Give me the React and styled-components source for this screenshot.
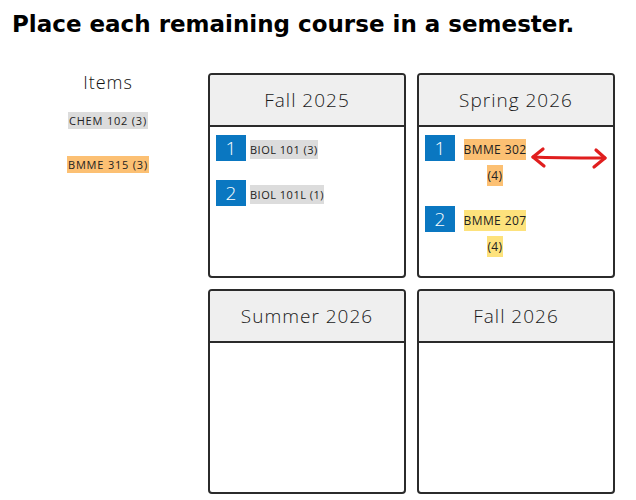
import styled, { createGlobalStyle } from "styled-components";

const GlobalStyle = createGlobalStyle`
    body {
        margin : 0;
        background : #ffffff;
        font-family : "Open Sans", "Liberation Sans", sans-serif;
        color : #222222;
    }
`;

const Page = styled.div`
    width : 636px;
    height : 500px;
    padding : 8px 0 0 8px;
    box-sizing : border-box;
`;

const Title = styled.h1`
    margin : 0 0 0 4px;
    font-family : "DejaVu Sans", "Open Sans", sans-serif;
    font-size : 23px;
    line-height : 32px;
    font-weight : 700;
    color : #000000;
`;

const Board = styled.div`
    display : flex;
    margin-top : 33px;
`;

const ItemsColumn = styled.div`
    width : 200px;
    display : flex;
    flex-direction : column;
    align-items : center;
    margin-top : -3px;

    .items-title {
        font-size : 18px;
        font-weight : 300;
        letter-spacing : 1px;
        line-height : 24px;
        color : #111111;
        margin-bottom : 18px;
    }
`;

const ItemList = styled.div`
    display : flex;
    flex-direction : column;
    align-items : center;
    gap : 27px;
`;

const Chip = styled.span`
    display : inline-block;
    font-size : 11px;
    letter-spacing : 0.8px;
    line-height : 17px;
    padding : 0 1px;
    color : #222222;
    background : ${p => p.$color};
    white-space : nowrap;
`;

const Grid = styled.div`
    display : grid;
    grid-template-columns : 198px 198px;
    grid-auto-rows : 205px;
    gap : 11px;
`;

const Card = styled.div`
    position : relative;
    border : 2px solid #2b2b2b;
    border-radius : 4px;
    box-sizing : border-box;
    display : flex;
    flex-direction : column;
`;

const CardHeader = styled.div`
    height : 50px;
    flex : none;
    display : flex;
    justify-content : center;
    align-items : center;
    background : #efefef;
    border-bottom : 2px solid #2b2b2b;
    border-radius : 2px 2px 0 0;
    font-size : 19px;
    font-weight : 300;
    letter-spacing : 1px;
    color : #1a1a1a;
`;

const CardBody = styled.div`
    display : flex;
    flex-direction : column;
    gap : 17px;
    padding : 8px 6px;
`;

const Row = styled.div`
    display : flex;
    align-items : flex-start;
`;

const Badge = styled.div`
    width : 30px;
    height : 26px;
    flex : none;
    display : flex;
    justify-content : center;
    align-items : center;
    background : #0a77c1;
    color : #ffffff;
    font-size : 19px;
    font-weight : 300;
`;

const Label = styled.div`
    margin : 2px 0 0 ${p => p.$gap}px;
    width : ${p => p.$width}px;
    text-align : ${p => p.$align};
    font-size : ${p => p.$size}px;
    letter-spacing : ${p => p.$spacing}px;
    line-height : 26px;

    span {
        background : ${p => p.$color};
        padding : 2px 0;
        -webkit-box-decoration-break : clone;
        box-decoration-break : clone;
        color : #222222;
    }
`;

const Arrow = styled.svg`
    position : absolute;
    left : 110px;
    top : 71px;
    width : 80px;
    height : 26px;
`;

const GREY = "#dcdcdc";
const ORANGE = "#fcc073";
const YELLOW = "#fde27c";

const semesters = [
    {
        name : "Fall 2025",
        courses : [
            { text : "BIOL 101 (3)", color : GREY },
            { text : "BIOL 101L (1)", color : GREY },
        ],
        compact : true,
    },
    {
        name : "Spring 2026",
        courses : [
            { text : "BMME 302 (4)", color : ORANGE },
            { text : "BMME 207 (4)", color : YELLOW },
        ],
        arrow : true,
    },
    { name : "Summer 2026", courses : [] },
    { name : "Fall 2026", courses : [] },
];

const App = () => {
    return (
        <>
        <GlobalStyle />
        <Page>
            <Title>Place each remaining course in a semester.</Title>
            <Board>
                <ItemsColumn>
                    <div className="items-title">Items</div>
                    <ItemList>
                        <Chip $color={GREY}>CHEM 102 (3)</Chip>
                        <Chip $color={ORANGE}>BMME 315 (3)</Chip>
                    </ItemList>
                </ItemsColumn>
                <Grid>
                    {semesters.map(s => (
                        <Card key={s.name}>
                            <CardHeader>{s.name}</CardHeader>
                            <CardBody>
                                {s.courses.map((c, i) => (
                                    <Row key={c.text}>
                                        <Badge>{i + 1}</Badge>
                                        {s.compact ? (
                                            <Label $gap={4} $width={90} $align="left" $size={11} $spacing={0.5} $color={c.color}>
                                                <span>{c.text}</span>
                                            </Label>
                                        ) : (
                                            <Label $gap={6} $width={68} $align="center" $size={12} $spacing={0.4} $color={c.color}>
                                                <span>{c.text}</span>
                                            </Label>
                                        )}
                                    </Row>
                                ))}
                            </CardBody>
                            {s.arrow && (
                                <Arrow viewBox="0 0 80 26">
                                    <path d="M4 11 C 25 12, 55 12, 76 12" fill="none" stroke="#e01e1e" strokeWidth="3.2" strokeLinecap="round" />
                                    <path d="M14 3 L 4 11 L 15 20" fill="none" stroke="#e01e1e" strokeWidth="3.2" strokeLinecap="round" strokeLinejoin="round" />
                                    <path d="M67 4 L 76 12 L 65 21" fill="none" stroke="#e01e1e" strokeWidth="3.2" strokeLinecap="round" strokeLinejoin="round" />
                                </Arrow>
                            )}
                        </Card>
                    ))}
                </Grid>
            </Board>
        </Page>
        </>
    );
};

export default App;
